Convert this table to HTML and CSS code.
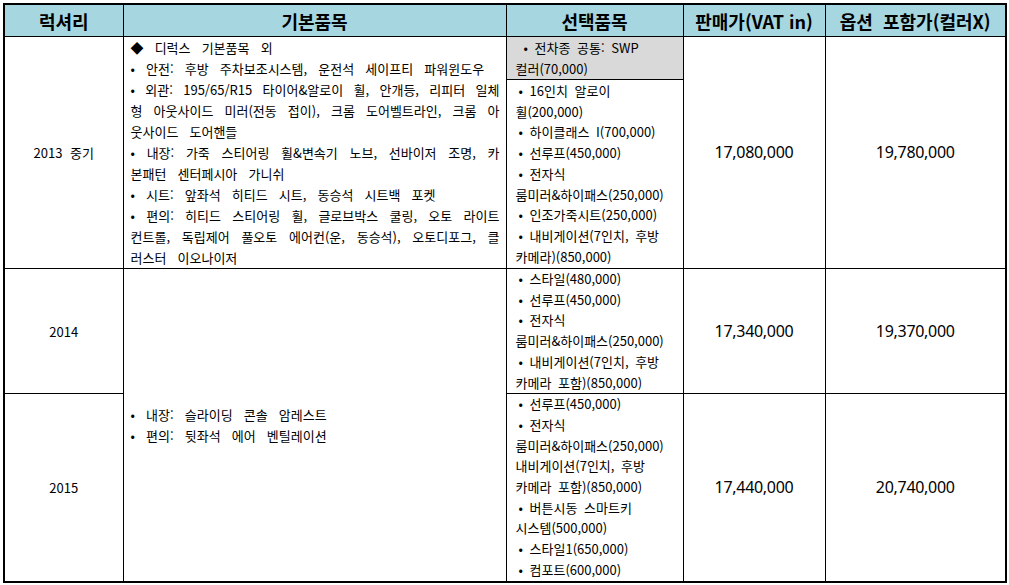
FILE: index.html
```html
<!DOCTYPE html>
<html lang="ko">
<head>
<meta charset="utf-8">
<title>럭셔리 가격표</title>
<link rel="stylesheet" href="styles.css">
</head>
<body>
<table class="price">
  <colgroup>
    <col class="c1"><col class="c2"><col class="c3"><col class="c4"><col class="c5">
  </colgroup>
  <thead>
    <tr class="head">
      <th>럭셔리</th>
      <th>기본품목</th>
      <th>선택품목</th>
      <th>판매가(VAT in)</th>
      <th class="wide">옵션 포함가(컬러X)</th>
    </tr>
  </thead>
  <tbody>
    <tr class="r-a">
      <td class="year" rowspan="2">2013 중기</td>
      <td class="basic" rowspan="2">
        <span class="ln">◆ 디럭스 기본품목 외</span>
        <span class="ln">• 안전: 후방 주차보조시스템, 운전석 세이프티 파워윈도우</span>
        <span class="ln jl">• 외관: 195/65/R15 타이어&amp;알로이 휠, 안개등, 리피터 일체</span>
        <span class="ln jl">형 아웃사이드 미러(전동 접이), 크롬 도어벨트라인, 크롬 아</span>
        <span class="ln">웃사이드 도어핸들</span>
        <span class="ln jl">• 내장: 가죽 스티어링 휠&amp;변속기 노브, 선바이저 조명, 카</span>
        <span class="ln">본패턴 센터페시아 가니쉬</span>
        <span class="ln">• 시트: 앞좌석 히티드 시트, 동승석 시트백 포켓</span>
        <span class="ln jl">• 편의: 히티드 스티어링 휠, 글로브박스 쿨링, 오토 라이트</span>
        <span class="ln jl">컨트롤, 독립제어 풀오토 에어컨(운, 동승석), 오토디포그, 클</span>
        <span class="ln">러스터 이오나이저</span>
      </td>
      <td class="opt common">
        <span class="ln bl first">• 전차종 공통: SWP</span>
        <span class="ln">컬러(70,000)</span>
      </td>
      <td class="price-v" rowspan="2">17,080,000</td>
      <td class="price-v" rowspan="2">19,780,000</td>
    </tr>
    <tr class="r-b">
      <td class="opt">
        <span class="ln bl">• 16인치 알로이</span>
        <span class="ln">휠(200,000)</span>
        <span class="ln bl">• 하이클래스 I(700,000)</span>
        <span class="ln bl">• 선루프(450,000)</span>
        <span class="ln bl">• 전자식</span>
        <span class="ln">룸미러&amp;하이패스(250,000)</span>
        <span class="ln bl">• 인조가죽시트(250,000)</span>
        <span class="ln bl">• 내비게이션(7인치, 후방</span>
        <span class="ln">카메라)(850,000)</span>
      </td>
    </tr>
    <tr class="r-c">
      <td class="year">2014</td>
      <td class="basic mid" rowspan="2">
        <span class="ln">• 내장: 슬라이딩 콘솔 암레스트</span>
        <span class="ln">• 편의: 뒷좌석 에어 벤틸레이션</span>
      </td>
      <td class="opt">
        <span class="ln bl">• 스타일(480,000)</span>
        <span class="ln bl">• 선루프(450,000)</span>
        <span class="ln bl">• 전자식</span>
        <span class="ln">룸미러&amp;하이패스(250,000)</span>
        <span class="ln bl">• 내비게이션(7인치, 후방</span>
        <span class="ln">카메라 포함)(850,000)</span>
      </td>
      <td class="price-v">17,340,000</td>
      <td class="price-v">19,370,000</td>
    </tr>
    <tr class="r-d">
      <td class="year">2015</td>
      <td class="opt">
        <span class="ln bl">• 선루프(450,000)</span>
        <span class="ln bl">• 전자식</span>
        <span class="ln">룸미러&amp;하이패스(250,000)</span>
        <span class="ln">내비게이션(7인치, 후방</span>
        <span class="ln">카메라 포함)(850,000)</span>
        <span class="ln bl">• 버튼시동 스마트키</span>
        <span class="ln">시스템(500,000)</span>
        <span class="ln bl">• 스타일1(650,000)</span>
        <span class="ln bl">• 컴포트(600,000)</span>
      </td>
      <td class="price-v">17,440,000</td>
      <td class="price-v">20,740,000</td>
    </tr>
  </tbody>
</table>
</body>
</html>
```

FILE: styles.css
```css
html, body {
  margin: 0;
  padding: 0;
  background: #ffffff;
}

body {
  padding: 3px 0 0 3px;
  font-family: "Noto Sans CJK KR", "Noto Sans", sans-serif;
  color: #000000;
}

.price {
  border-collapse: collapse;
  table-layout: fixed;
  width: 1002px;
  border: 2px solid #000000;
}

.c1 { width: 119px; }
.c2 { width: 383px; }
.c3 { width: 177px; }
.c4 { width: 142px; }
.c5 { width: 181px; }

.price th,
.price td {
  border: 1px solid #000000;
  padding: 0;
}

.head th {
  height: 31px;
  background: #a6d6e0;
  font-size: 18px;
  font-weight: 700;
  line-height: 22px;
  text-align: center;
  vertical-align: middle;
  white-space: nowrap;
}

.head th.wide {
  word-spacing: 5px;
}

.price td {
  font-size: 13px;
  line-height: 21px;
  vertical-align: middle;
}

.ln {
  display: block;
  white-space: nowrap;
}

.price td.year {
  text-align: center;
  word-spacing: 4px;
}

.price td.basic {
  padding: 0 6px 0 7px;
  word-spacing: 7.5px;
  vertical-align: top;
}

.price td.basic.mid {
  vertical-align: middle;
}

.price td.basic .jl {
  text-align: justify;
  text-align-last: justify;
  word-spacing: 1px;
}

.price td.opt {
  padding: 0 4px 0 9px;
  line-height: 20.7px;
  word-spacing: 3px;
}

.price td.opt.common {
  background: #d9d9d9;
  line-height: 21px;
}

.bl {
  padding-left: 3px;
}

.bl.first {
  padding-left: 8px;
}

.price td.price-v {
  text-align: center;
  font-family: "Noto Sans", sans-serif;
  font-size: 16px;
  letter-spacing: -0.3px;
  word-spacing: 0;
}
```
